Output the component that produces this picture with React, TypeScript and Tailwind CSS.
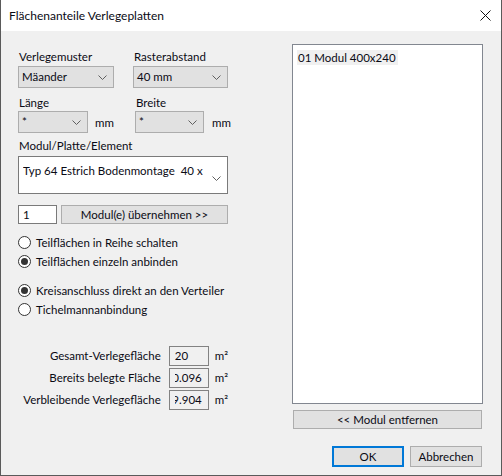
import React from "react";

const FONT = "font-['Lato',_'Noto_Sans',_sans-serif]";

function Chevron() {
  return (
    <svg width="9" height="5" viewBox="0 0 9 5" className="shrink-0">
      <path d="M0.5 0.5 L4.5 4.5 L8.5 0.5" fill="none" stroke="#5f5f5f" strokeWidth="1" />
    </svg>
  );
}

function Select({ value, w }: { value: string; w: string }) {
  return (
    <div
      className={`${w} h-[22px] bg-[#e1e1e1] border border-[#adadad] flex items-center justify-between pl-[3px] pr-[6px]`}
    >
      <span className="leading-none">{value}</span>
      <Chevron />
    </div>
  );
}

function Radio({ label, checked }: { label: string; checked?: boolean }) {
  return (
    <div className="h-[19px] flex items-center gap-[5px] whitespace-nowrap">
      <div className="w-[13px] h-[13px] rounded-full border border-[#333] bg-white flex items-center justify-center shrink-0">
        {checked && <div className="w-[7px] h-[7px] rounded-full bg-[#333]" />}
      </div>
      <span>{label}</span>
    </div>
  );
}

function Stat({ label, value, overflow }: { label: string; value: string; overflow?: boolean }) {
  return (
    <div className="flex items-center h-[20px] whitespace-nowrap">
      <span className="w-[160px] text-right">{label}</span>
      <div className="ml-[8px] w-[40px] h-[20px] border border-[#828282] flex items-center pl-[5px]">
        <div className={`w-[27px] overflow-hidden flex ${overflow ? "justify-end" : "justify-start"}`}>
          <span className="shrink-0">{value}</span>
        </div>
      </div>
      <span className="ml-[6px]">m²</span>
    </div>
  );
}

export default function App() {
  return (
    <div
      className={`${FONT} w-[502px] h-[476px] flex flex-col border-x border-b border-[#5a5a5a] text-[11.5px] text-[#0a0a14] bg-[#f0f0f0] overflow-hidden`}
    >
      {/* title bar */}
      <div className="h-[31px] bg-white flex items-center justify-between pl-[8px] pr-[10px] shrink-0">
        <span className="text-[12px]">Flächenanteile Verlegeplatten</span>
        <svg width="11" height="11" viewBox="0 0 11 11">
          <path d="M0.5 0.5 L10.5 10.5 M10.5 0.5 L0.5 10.5" stroke="#111" strokeWidth="1" />
        </svg>
      </div>

      <div className="flex flex-1">
        {/* left column */}
        <div className="ml-[17px] w-[210px] pt-[18px] flex flex-col">
          <div className="flex gap-[19px]">
            <div className="flex flex-col">
              <span className="h-[17px] leading-[16px] pl-[1px]">Verlegemuster</span>
              <Select value="Mäander" w="w-[96px]" />
            </div>
            <div className="flex flex-col">
              <span className="h-[17px] leading-[16px] pl-[1px]">Rasterabstand</span>
              <Select value="40 mm" w="w-[95px]" />
            </div>
          </div>

          <div className="flex mt-[7px]">
            <div className="flex flex-col">
              <span className="h-[16px] leading-[16px] pl-[1px]">Länge</span>
              <div className="flex items-end">
                <Select value="*" w="w-[70px]" />
                <span className="ml-[7px] mb-[2px]">mm</span>
              </div>
            </div>
            <div className="flex flex-col ml-[21px]">
              <span className="h-[16px] leading-[16px] pl-[1px]">Breite</span>
              <div className="flex items-end">
                <Select value="*" w="w-[69px]" />
                <span className="ml-[8px] mb-[2px]">mm</span>
              </div>
            </div>
          </div>

          <span className="mt-[5px] h-[18px] leading-[16px] pl-[1px]">Modul/Platte/Element</span>
          <div className="w-[210px] h-[38px] bg-white border border-[#7a7a7a] flex items-start justify-between pl-[4px] pr-[6px] pt-[6px]">
            <div className="w-[182px] overflow-hidden whitespace-pre leading-[16px]">
              Typ 64 Estrich Bodenmontage  40 x 240
            </div>
            <div className="mt-[13px]">
              <Chevron />
            </div>
          </div>

          <div className="flex gap-[4px] mt-[11px]">
            <div className="w-[39px] h-[19px] bg-white border border-[#7a7a7a] flex items-center pl-[4px]">1</div>
            <div className="w-[167px] h-[19px] bg-[#e1e1e1] border border-[#adadad] flex items-center justify-center">
              Modul(e) übernehmen &gt;&gt;
            </div>
          </div>

          <div className="mt-[9px] flex flex-col">
            <Radio label="Teilflächen in Reihe schalten" />
            <Radio label="Teilflächen einzeln anbinden" checked />
          </div>
          <div className="mt-[10px] flex flex-col">
            <Radio label="Kreisanschluss direkt an den Verteiler" checked />
            <Radio label="Tichelmannanbindung" />
          </div>

          <div className="mt-[27px] flex flex-col gap-[2px] -ml-[17px]">
            <Stat label="Gesamt-Verlegefläche" value="20" />
            <Stat label="Bereits belegte Fläche" value="0.096" overflow />
            <Stat label="Verbleibende Verlegefläche" value="19.904" overflow />
          </div>
        </div>

        {/* right column */}
        <div className="ml-[64px] w-[191px] pt-[13px] flex flex-col">
          <div className="h-[360px] bg-white border border-[#828790] p-[4px]">
            <span className="inline-block bg-[#f0f0f0] pl-[1px] pr-[2px] leading-[15px]">01 Modul 400x240</span>
          </div>
          <div className="mt-[6px] ml-[1px] w-[189px] h-[19px] bg-[#e1e1e1] border border-[#adadad] flex items-center justify-center">
            &lt;&lt; Modul entfernen
          </div>
          <div className="mt-[17px] flex justify-end gap-[6px] pr-[1px]">
            <div className="w-[72px] h-[21px] bg-[#e1e1e1] border-2 border-[#0078d7] flex items-center justify-center">
              OK
            </div>
            <div className="w-[72px] h-[21px] bg-[#e1e1e1] border border-[#adadad] flex items-center justify-center">
              Abbrechen
            </div>
          </div>
        </div>
      </div>
    </div>
  );
}
